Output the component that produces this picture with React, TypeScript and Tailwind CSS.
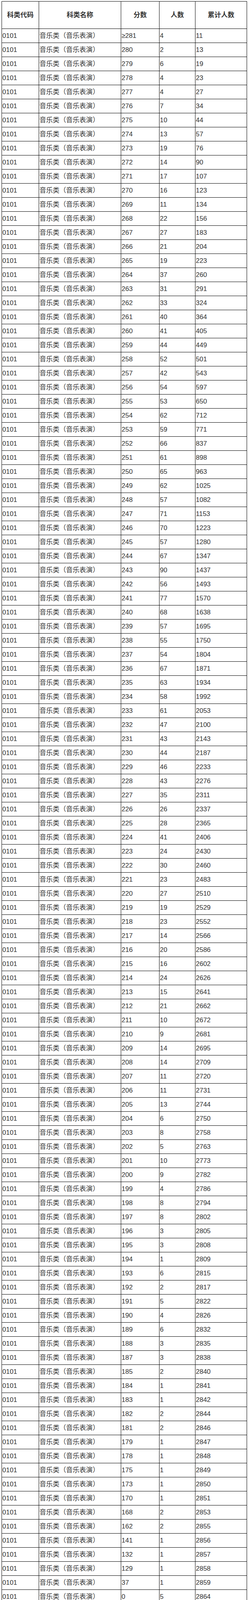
const rows: [string, number, number][] = [
  ["≥281", 4, 11], ["280", 2, 13], ["279", 6, 19], ["278", 4, 23], ["277", 4, 27],
  ["276", 7, 34], ["275", 10, 44], ["274", 13, 57], ["273", 19, 76], ["272", 14, 90],
  ["271", 17, 107], ["270", 16, 123], ["269", 11, 134], ["268", 22, 156], ["267", 27, 183],
  ["266", 21, 204], ["265", 19, 223], ["264", 37, 260], ["263", 31, 291], ["262", 33, 324],
  ["261", 40, 364], ["260", 41, 405], ["259", 44, 449], ["258", 52, 501], ["257", 42, 543],
  ["256", 54, 597], ["255", 53, 650], ["254", 62, 712], ["253", 59, 771], ["252", 66, 837],
  ["251", 61, 898], ["250", 65, 963], ["249", 62, 1025], ["248", 57, 1082], ["247", 71, 1153],
  ["246", 70, 1223], ["245", 57, 1280], ["244", 67, 1347], ["243", 90, 1437], ["242", 56, 1493],
  ["241", 77, 1570], ["240", 68, 1638], ["239", 57, 1695], ["238", 55, 1750], ["237", 54, 1804],
  ["236", 67, 1871], ["235", 63, 1934], ["234", 58, 1992], ["233", 61, 2053], ["232", 47, 2100],
  ["231", 43, 2143], ["230", 44, 2187], ["229", 46, 2233], ["228", 43, 2276], ["227", 35, 2311],
  ["226", 26, 2337], ["225", 28, 2365], ["224", 41, 2406], ["223", 24, 2430], ["222", 30, 2460],
  ["221", 23, 2483], ["220", 27, 2510], ["219", 19, 2529], ["218", 23, 2552], ["217", 14, 2566],
  ["216", 20, 2586], ["215", 16, 2602], ["214", 24, 2626], ["213", 15, 2641], ["212", 21, 2662],
  ["211", 10, 2672], ["210", 9, 2681], ["209", 14, 2695], ["208", 14, 2709], ["207", 11, 2720],
  ["206", 11, 2731], ["205", 13, 2744], ["204", 6, 2750], ["203", 8, 2758], ["202", 5, 2763],
  ["201", 10, 2773], ["200", 9, 2782], ["199", 4, 2786], ["198", 8, 2794], ["197", 8, 2802],
  ["196", 3, 2805], ["195", 3, 2808], ["194", 1, 2809], ["193", 6, 2815], ["192", 2, 2817],
  ["191", 5, 2822], ["190", 4, 2826], ["189", 6, 2832], ["188", 3, 2835], ["187", 3, 2838],
  ["185", 2, 2840], ["184", 1, 2841], ["183", 1, 2842], ["182", 2, 2844], ["181", 2, 2846],
  ["179", 1, 2847], ["178", 1, 2848], ["175", 1, 2849], ["173", 1, 2850], ["170", 1, 2851],
  ["168", 2, 2853], ["162", 2, 2855], ["141", 1, 2856], ["132", 1, 2857], ["129", 1, 2858],
  ["37", 1, 2859], ["0", 5, 2864],
];

// fixed column widths, borders drawn on the right of each cell
const cols = "grid grid-cols-[95px_210px_98px_92px_132px]";
const cell = "flex items-center border-r border-black px-px";
const head = "flex items-center justify-center border-r border-black font-bold";

export default function App() {
  return (
    <div className="w-[637px] bg-white pt-[3px] font-['Liberation_Sans','Noto_Sans_CJK_SC',sans-serif] text-[17px] leading-tight text-[#333]">
      <div className="border-b border-[#e4e4e4] pb-[15px]">
        <div className="ml-[4px] w-[628px] border-t border-l border-black">
          <div className={`${cols} h-[70px] border-b border-black`}>
            <div className={head}>科类代码</div>
            <div className={head}>科类名称</div>
            <div className={head}>分数</div>
            <div className={head}>人数</div>
            <div className={head}>累计人数</div>
          </div>
          {rows.map(([score, count, total]) => (
            <div key={score} className={`${cols} h-[36px] border-b border-black`}>
              <div className={cell}>0101</div>
              <div className={cell}>音乐类（音乐表演）</div>
              <div className={cell}>{score}</div>
              <div className={cell}>{count}</div>
              <div className={cell}>{total}</div>
            </div>
          ))}
        </div>
      </div>
    </div>
  );
}
